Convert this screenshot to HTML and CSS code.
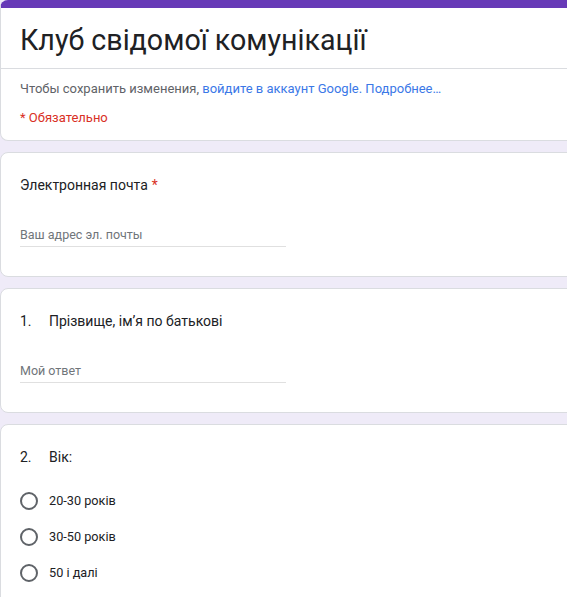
FILE: index.html
```html
<!DOCTYPE html>
<html lang="uk">
<head>
<meta charset="utf-8">
<title>Клуб свідомої комунікації</title>
<link rel="stylesheet" href="styles.css">
</head>
<body>
<div class="form">
  <section class="card head">
    <h1 class="title">Клуб свідомої комунікації</h1>
    <div class="head-info">
      <p class="note">Чтобы сохранить изменения, <a class="link" href="#">войдите в аккаунт Google.</a> <a class="link" href="#">Подробнее…</a></p>
      <p class="required">* Обязательно</p>
    </div>
  </section>

  <section class="card">
    <div class="q-label">Электронная почта <span class="star">*</span></div>
    <div class="field"><span class="placeholder">Ваш адрес эл. почты</span></div>
  </section>

  <section class="card">
    <div class="q-label"><span class="num">1.</span>Прізвище, ім’я по батькові</div>
    <div class="field"><span class="placeholder">Мой ответ</span></div>
  </section>

  <section class="card">
    <div class="q-label"><span class="num">2.</span>Вік:</div>
    <div class="options">
      <label class="option"><span class="radio"></span>20-30 років</label>
      <label class="option"><span class="radio"></span>30-50 років</label>
      <label class="option"><span class="radio"></span>50 і далі</label>
    </div>
  </section>
</div>
</body>
</html>
```
FILE: styles.css
```css
* { box-sizing: border-box; }
html, body { margin: 0; padding: 0; }
body {
  background: #efebf8;
  font-family: Roboto, "Noto Sans", Arial, sans-serif;
  color: #202124;
  overflow: hidden;
}
.form {
  display: flex;
  flex-direction: column;
  gap: 11px;
  width: 640px;
}
.card {
  background: #fff;
  border: 1px solid #dadce0;
  border-radius: 8px;
  padding: 22px 19px 29px;
}
.head {
  border-top: 8px solid #673ab7;
  padding: 0;
}
.title {
  margin: 0;
  padding: 14px 19px 10px;
  font-size: 28.6px;
  line-height: 36px;
  font-weight: 400;
  color: #202124;
}
.head-info {
  border-top: 1px solid #dadce0;
  padding: 11px 19px 13px;
}
.note, .required {
  margin: 0;
  font-size: 13px;
  line-height: 18px;
}
.note { color: #5f6368; }
.link { color: #3b78e7; text-decoration: none; }
.required { color: #d93025; margin-top: 11px; }
.q-label {
  display: flex;
  font-size: 14px;
  line-height: 20px;
  color: #202124;
}
.star { color: #d93025; margin-left: 4px; }
.num { width: 29px; flex: none; }
.field {
  margin-top: 31px;
  width: 266px;
  height: 21px;
  border-bottom: 1px solid #e0e0e0;
  font-size: 12.5px;
  line-height: 18px;
}
.placeholder { color: #70757a; }
.options {
  display: flex;
  flex-direction: column;
  gap: 16px;
  margin-top: 24px;
}
.option {
  display: flex;
  align-items: center;
  font-size: 12.7px;
  line-height: 20px;
  color: #202124;
}
.radio {
  width: 18px;
  height: 18px;
  border: 2px solid #5f6368;
  border-radius: 50%;
  margin-right: 11px;
  flex: none;
}
```
